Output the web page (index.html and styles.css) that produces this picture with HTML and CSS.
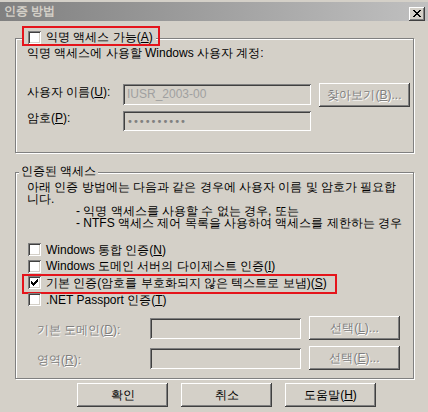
FILE: index.html
```html
<!DOCTYPE html>
<html lang="ko">
<head>
<meta charset="utf-8">
<title>인증 방법</title>
<link rel="stylesheet" href="styles.css">
</head>
<body>
<div class="titlebar">
  <span class="title">인증 방법</span>
  <span class="close"><svg width="16" height="14" viewBox="0 0 16 14"><g fill="#000"><rect x="4" y="3" width="2" height="1"/><rect x="10" y="3" width="2" height="1"/><rect x="5" y="4" width="2" height="1"/><rect x="9" y="4" width="2" height="1"/><rect x="6" y="5" width="4" height="1"/><rect x="7" y="6" width="2" height="1"/><rect x="6" y="7" width="4" height="1"/><rect x="5" y="8" width="2" height="1"/><rect x="9" y="8" width="2" height="1"/><rect x="4" y="9" width="2" height="1"/><rect x="10" y="9" width="2" height="1"/></g></svg></span>
</div>

<div class="group g1">
  <div class="legend legend1">
    <span class="check"></span><span class="legend-label">익명 액세스 가능(<u>A</u>)</span>
    <span class="mark mark1"></span>
  </div>
  <p class="line">익명 액세스에 사용할 Windows 사용자 계정:</p>
  <div class="row row-user">
    <span class="lbl lbl-user">사용자 이름(<u>U</u>):</span>
    <span class="field field-user">IUSR_2003-00</span>
    <span class="btn btn-side disabled">찾아보기(<u>B</u>)...</span>
  </div>
  <div class="row row-pass">
    <span class="lbl lbl-pass">암호(<u>P</u>):</span>
    <span class="field field-pass"><span class="dots">••••••••••</span></span>
  </div>
</div>

<div class="group g2">
  <div class="legend legend2">인증된 액세스</div>
  <p class="para">아래 인증 방법에는 다음과 같은 경우에 사용자 이름 및 암호가 필요합<br>니다.</p>
  <p class="bullets">- 익명 액세스를 사용할 수 없는 경우, 또는<br>- NTFS 액세스 제어 목록을 사용하여 액세스를 제한하는 경우</p>
  <div class="checks">
    <div class="crow c1"><span class="check"></span><span>Windows 통합 인증(<u>N</u>)</span></div>
    <div class="crow c2"><span class="check"></span><span>Windows 도메인 서버의 다이제스트 인증(<u>I</u>)</span></div>
    <div class="crow c3"><span class="check"><svg width="13" height="13" viewBox="0 0 13 13"><g fill="#000"><rect x="9" y="3" width="1" height="1"/><rect x="8" y="4" width="2" height="1"/><rect x="3" y="5" width="1" height="1"/><rect x="7" y="5" width="3" height="1"/><rect x="3" y="6" width="2" height="1"/><rect x="6" y="6" width="3" height="1"/><rect x="3" y="7" width="5" height="1"/><rect x="4" y="8" width="3" height="1"/><rect x="5" y="9" width="1" height="1"/></g></svg></span><span>기본 인증(암호를 부호화되지 않은 텍스트로 보냄)(<u>S</u>)</span><span class="mark mark2"></span></div>
    <div class="crow c4"><span class="check"></span><span>.NET Passport 인증(<u>T</u>)</span></div>
  </div>
  <div class="row drow drow1">
    <span class="lbl lbl-dom disabled">기본 도메인(<u>D</u>):</span>
    <span class="field field-dom"></span>
    <span class="btn btn-side disabled">선택(<u>L</u>)...</span>
  </div>
  <div class="row drow drow2">
    <span class="lbl lbl-dom disabled">영역(<u>R</u>):</span>
    <span class="field field-dom"></span>
    <span class="btn btn-side disabled">선택(<u>E</u>)...</span>
  </div>
</div>

<div class="actions">
  <span class="btn btn-main">확인</span>
  <span class="btn btn-main">취소</span>
  <span class="btn btn-main">도움말(<u>H</u>)</span>
</div>
</body>
</html>
```

FILE: styles.css
```css
* { box-sizing: border-box; margin: 0; padding: 0; }

html, body { width: 428px; height: 412px; overflow: hidden; }

body {
  background: #d4d0c8;
  font-family: "Liberation Sans", "DejaVu Sans", sans-serif;
  font-size: 12px;
  color: #000;
  padding-top: 2px;
}

u { text-decoration: underline; text-underline-offset: 1px; }

/* title bar */
.titlebar {
  display: flex;
  justify-content: space-between;
  height: 19px;
  padding: 0 3px 0 4px;
  background: linear-gradient(to right, #808080, #c0c0c0);
}
.title {
  font-weight: bold;
  color: #d4d0c8;
  line-height: 19px;
}
.close {
  align-self: flex-end;
  width: 16px;
  height: 14px;
  display: block;
  background: #d4d0c8;
  box-shadow: inset -1px -1px 0 #404040, inset 1px 1px 0 #fff, inset -2px -2px 0 #808080;
}
.close svg { display: block; }

/* group boxes */
.group {
  position: relative;
  margin-left: 15px;
  width: 399px;
  border: 1px solid #808080;
  box-shadow: 1px 1px 0 #fff, inset 1px 1px 0 #fff;
}
.g1 { margin-top: 17px; height: 115px; padding: 7px 0 0 11px; }
.g2 { margin-top: 19px; height: 207px; padding: 8px 0 0 11px; }

.legend {
  position: absolute;
  background: #d4d0c8;
  display: flex;
  align-items: center;
}
.legend1 { left: 8px; top: -8px; height: 13px; padding: 0 3px 0 4px; }
.legend1 .legend-label { margin-left: 5px; line-height: 13px; }
.legend2 { left: 3px; top: -9px; line-height: 14px; padding: 0 2px; }

.mark {
  position: absolute;
  border: 2px solid #e5141b;
  pointer-events: none;
}
.mark1 { left: -2px; top: -5px; width: 138px; height: 20px; }
.mark2 { left: -5px; top: 0; width: 315px; height: 20px; }

/* checkbox */
.check {
  flex: none;
  display: block;
  width: 13px;
  height: 13px;
  background: #fff;
  box-shadow: inset 1px 1px 0 #808080, inset -1px -1px 0 #fff, inset 2px 2px 0 #404040, inset -2px -2px 0 #d4d0c8;
}
.check svg { display: block; }

/* group 1 content */
.line { line-height: 14px; }
.row { display: flex; align-items: flex-start; }
.lbl { flex: none; }
.row-user { margin-top: 23px; height: 24px; }
.lbl-user { width: 96px; line-height: 18px; }
.row-pass { margin-top: 4px; height: 20px; }
.lbl-pass { width: 96px; line-height: 14px; }

.field {
  flex: none;
  display: block;
  background: #d4d0c8;
  box-shadow: inset 1px 1px 0 #808080, inset -1px -1px 0 #fff, inset 2px 2px 0 #404040, inset -2px -2px 0 #d4d0c8;
  padding-left: 4px;
  color: #a0a0a0;
}
.field-user { width: 188px; height: 21px; margin-top: 1px; line-height: 21px; }
.field-pass { width: 188px; height: 20px; line-height: 20px; }
.dots {
  font-family: "DejaVu Sans", sans-serif;
  font-size: 10px;
  color: #808080;
}

.btn {
  flex: none;
  display: flex;
  align-items: center;
  justify-content: center;
  background: #d4d0c8;
  box-shadow: inset -1px -1px 0 #404040, inset 1px 1px 0 #fff, inset -2px -2px 0 #808080;
  line-height: 14px;
}
.btn-side { width: 91px; height: 24px; margin-left: 8px; }
.disabled { color: #808080; text-shadow: 1px 1px 0 #fff; }

/* group 2 content */
.para { line-height: 12px; }
.bullets { line-height: 12px; padding-left: 49px; }

.checks { margin-top: 12px; }
.crow {
  position: relative;
  display: flex;
  align-items: center;
  line-height: 14px;
}
.crow .check { margin: 0 5px 0 1px; }
.c1 { height: 17px; }
.c2 { height: 16px; }
.c3 { height: 17px; }
.c4 { height: 17px; }

.drow { height: 24px; }
.drow1 { margin-top: 8px; }
.drow2 { margin-top: 6px; }
.lbl-dom { width: 123px; padding-left: 10px; line-height: 14px; margin-top: 7px; }
.field-dom { width: 151px; height: 21px; margin-top: 2px; }

/* bottom buttons */
.actions {
  display: flex;
  gap: 13px;
  margin-top: 4px;
  padding-left: 77px;
}
.btn-main { width: 91px; height: 24px; }
```
